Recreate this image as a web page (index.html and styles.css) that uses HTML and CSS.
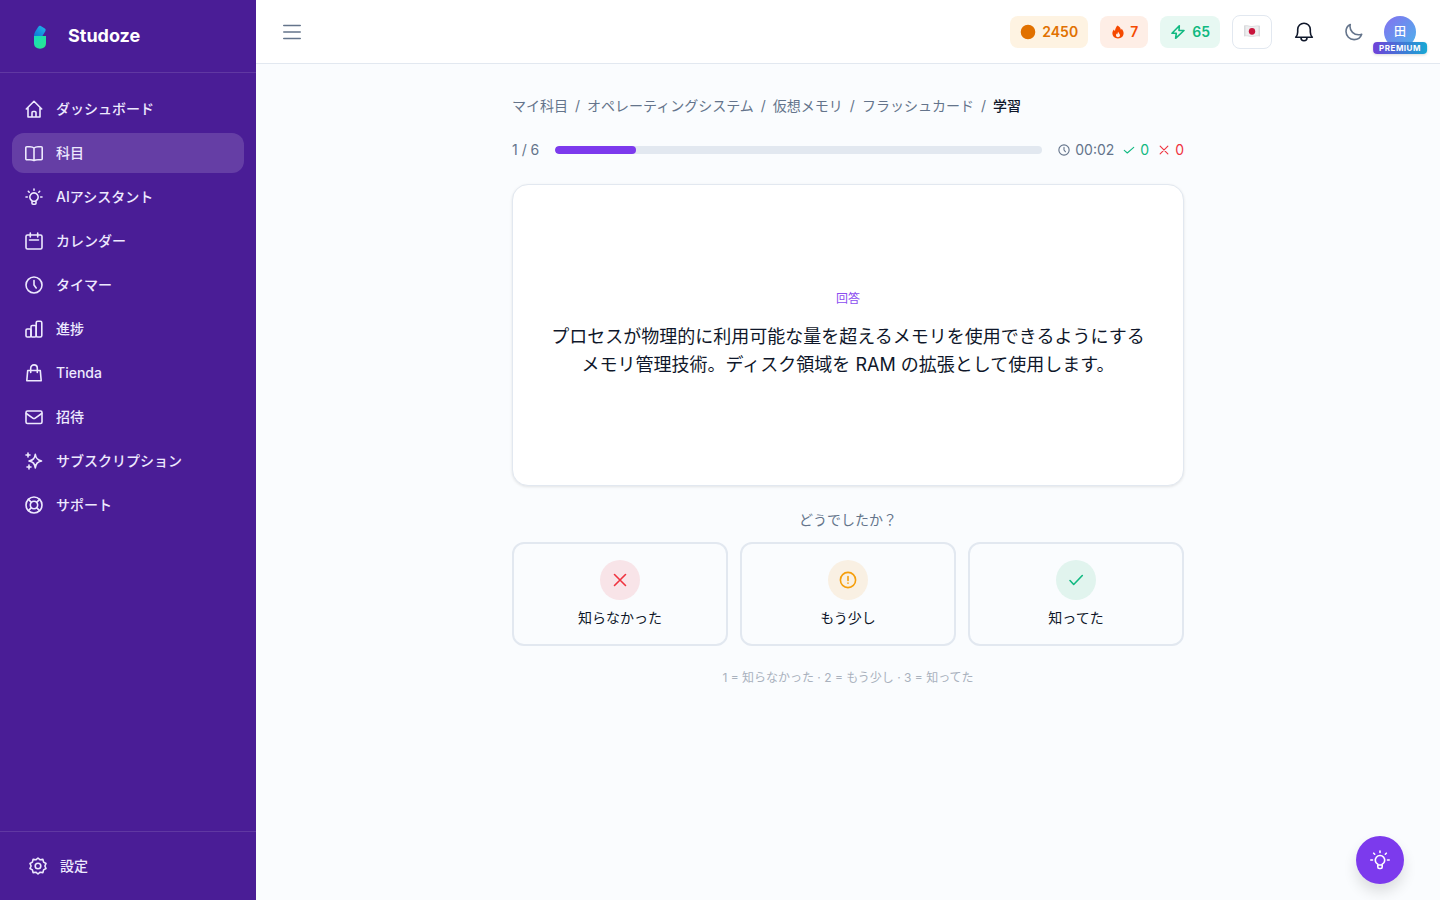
FILE: index.html
```html
<!DOCTYPE html>
<html lang="ja">
<head>
  <meta charset="UTF-8" />
  <meta name="viewport" content="width=device-width, initial-scale=1.0" />
  <title>学習 - Studoze</title>
  <link rel="stylesheet" href="styles.css">
</head>
<body>
  <aside class="sidebar">
    <a class="brand" href="#">
      <svg class="brand-logo" viewBox="0 0 32 32" aria-hidden="true">
        <defs>
          <linearGradient id="cap" x1="0" y1="1" x2="1" y2="0">
            <stop offset="0" stop-color="#0d74d8" />
            <stop offset="1" stop-color="#22b8e8" />
          </linearGradient>
          <linearGradient id="base" x1="0" y1="0" x2="1" y2="1">
            <stop offset="0" stop-color="#14dcc0" />
            <stop offset="1" stop-color="#2ee58a" />
          </linearGradient>
        </defs>
        <path d="M10 16c0-3 1.800-5.300 3.800-8.500.8-1.400 2-2 3-1.400l4 2.500c1 .7 1.100 1.600.4 2.800L18.400 16z" fill="url(#cap)" />
        <path d="M10 16h12v7c0 3.700-2.500 5.700-6 5.700s-6-2-6-5.700z" fill="url(#base)" />
      </svg>
      <span class="brand-name">Studoze</span>
    </a>

    <nav class="menu">
      <a href="#">
        <svg class="icon" viewBox="0 0 20 20"><path d="M2.300 10 10 2.300l7.700 7.700M4 8.500V18h12V8.500M8 18v-4.500a1 1 0 0 1 1-1h2a1 1 0 0 1 1 1V18" /></svg>
        ダッシュボード
      </a>
      <a class="active" href="#">
        <svg class="icon" viewBox="0 0 20 20"><path d="M10 5C8.800 3.900 7.500 3.700 6 3.700H2.800a1 1 0 0 0-1 1v11a1 1 0 0 0 1 1H6c1.500 0 2.800 0 4 .8 1.200-.8 2.500-.8 4-.8h3.200a1 1 0 0 0 1-1v-11a1 1 0 0 0-1-1H14c-1.500 0-2.800.2-4 1.300zM10 5v12.300" /></svg>
        科目
      </a>
      <a href="#">
        <svg class="icon" viewBox="0 0 20 20"><path d="M8 13.800a4.200 4.200 0 1 1 4 0v2.400a1 1 0 0 1-1 1H9a1 1 0 0 1-1-1zM8 14.300h4M10 2v1.300M4.300 4.300l.9.900M15.700 4.300l-.9.900M2 10h1.300M16.700 10H18" /></svg>
        AIアシスタント
      </a>
      <a href="#">
        <svg class="icon" viewBox="0 0 20 20"><rect x="2" y="4" width="16" height="14" rx="1.500" /><path d="M6.300 2v4M13.700 2v4M5.500 9h9" /></svg>
        カレンダー
      </a>
      <a href="#">
        <svg class="icon" viewBox="0 0 20 20"><circle cx="10" cy="10" r="8" /><path d="M10 5.500V10l2.200 3" /></svg>
        タイマー
      </a>
      <a href="#">
        <svg class="icon" viewBox="0 0 20 20"><rect x="2" y="10" width="5" height="8" rx="1.200" /><rect x="7" y="6.500" width="5.200" height="11.500" rx="1.200" /><rect x="12.200" y="2.300" width="5.600" height="15.700" rx="1.500" /></svg>
        進捗
      </a>
      <a href="#">
        <svg class="icon" viewBox="0 0 20 20"><path d="M3.700 7.500h12.600L17.200 17.700H2.800zM6.700 9.500V5.200a3.300 3.300 0 0 1 6.600 0v4.300" /></svg>
        Tienda
      </a>
      <a href="#">
        <svg class="icon" viewBox="0 0 20 20"><rect x="2" y="4" width="16" height="12.500" rx="1.500" /><path d="m2.300 6.500 6.500 4.600a2 2 0 0 0 2.400 0l6.500-4.600" /></svg>
        招待
      </a>
      <a href="#">
        <svg class="icon" viewBox="0 0 20 20"><path d="M11.300 3.300c.7 4.200 2 5.800 6.200 6.700-4.200.9-5.500 2.500-6.200 6.900-.7-4.400-2-6-6.300-6.900 4.300-.9 5.600-2.500 6.300-6.700zM4 2v4M2 4h4M5 14v4M3 16h4" /></svg>
        サブスクリプション
      </a>
      <a href="#">
        <svg class="icon" viewBox="0 0 20 20"><circle cx="10" cy="10" r="8" /><circle cx="10" cy="10" r="3.700" /><path d="m4.400 4.400 3 3M15.600 4.400l-3 3M4.400 15.600l3-3M15.600 15.600l-3-3" /></svg>
        サポート
      </a>
    </nav>

    <div class="sidebar-footer">
      <a href="#">
        <svg class="icon" viewBox="0 0 20 20"><path d="m10 2 2.100 1.800 2.800-.4.700 2.700 2.400 1.400-1.100 2.500 1.100 2.500-2.400 1.400-.7 2.700-2.800-.4L10 18l-2.100-1.800-2.800.4-.7-2.700L2 12.500 3.100 10 2 7.500l2.400-1.400.7-2.700 2.800.4z" /><circle cx="10" cy="10" r="2.800" /></svg>
        設定
      </a>
    </div>
  </aside>

  <div class="page">
    <header class="topbar">
      <button class="icon-btn menu-btn" type="button" aria-label="メニュー">
        <svg viewBox="0 0 20 20"><path d="M1.800 3.500h16.400M1.800 10h16.400M1.800 16.500h16.400" /></svg>
      </button>

      <div class="topbar-right">
        <span class="pill coins">
          <svg viewBox="0 0 16 16"><circle cx="8" cy="8" r="6.500" fill="currentColor" /></svg>
          2450
        </span>
        <span class="pill streak">
          <svg viewBox="0 0 16 16"><path fill="currentColor" d="M7.500 1.500c2.200 1.100 3.300 2.700 3.400 4.600.4-.3.600-.8.700-1.300 1.300 1.300 2 2.900 2 4.500 0 3-2.300 5.200-5.600 5.200S2.400 12.300 2.400 9.300c0-1.500.6-2.800 1.600-3.800.2.800.5 1.300 1 1.600.1-2.300 1.200-4.300 2.500-5.600z" /><path class="flame-inner" d="M8.200 7.800c.2 1.300 1.800 1.900 1.800 3.400 0 1.200-.8 2-2 2s-2-.8-2-2c0-.8.300-1.300.7-1.700.1.500.4.700.7.800 0-1 .3-1.800.8-2.500z" /></svg>
          7
        </span>
        <span class="pill energy">
          <svg viewBox="0 0 16 16"><path d="M9.300 1.700 2 9.300h4.300l-.7 5L14 6.500H9z" /></svg>
          65
        </span>
        <button class="lang-btn" type="button" aria-label="日本語">
          <svg viewBox="0 0 16 12"><path d="M0 .6c3-.8 5 .8 8 .4s5-.8 8-.2v10.600c-3-.6-5 .2-8 .4s-5-1-8-.3z" fill="#d9dadd" /><path d="M1.500 1.300c2.500-.3 4.500.8 6.500.5s4.500-.7 6.500-.4v9.200c-2.500-.3-4.500.2-6.500.4s-4-.8-6.500-.5z" fill="#eeeeef" /><ellipse cx="8" cy="6.300" rx="3.200" ry="3.400" fill="#c8143c" /></svg>
        </button>
        <button class="icon-btn bell-btn" type="button" aria-label="通知">
          <svg viewBox="0 0 20 20"><path d="M1.700 15.300c1.500-1.500 2-3 2-5.300V7.500a6.300 6.300 0 0 1 12.600 0V10c0 2.300.5 3.800 2 5.300zM7 15.700a3 3 0 0 0 6 0" /></svg>
        </button>
        <button class="icon-btn moon-btn" type="button" aria-label="ダークモード">
          <svg viewBox="0 0 20 20"><path d="M6.300 2.500C3.700 3.800 2 6.400 2 9.500 2 14 5.600 17.600 10.100 17.600c3.500 0 6.500-2.200 7.600-5.400-1 .4-2.100.6-3.200.6-4.700 0-8.500-3.700-8.500-8.300 0-.7.100-1.400.3-2z" /></svg>
        </button>
        <a class="avatar" href="#">
          <span class="avatar-img">田</span>
          <span class="badge">PREMIUM</span>
        </a>
      </div>
    </header>

    <main class="content">
      <nav class="breadcrumb">
        <a href="#">マイ科目</a>
        <span>/</span>
        <a href="#">オペレーティングシステム</a>
        <span>/</span>
        <a href="#">仮想メモリ</a>
        <span>/</span>
        <a href="#">フラッシュカード</a>
        <span>/</span>
        <span class="current">学習</span>
      </nav>

      <div class="progress-row">
        <span>1 / 6</span>
        <div class="progress" role="progressbar" aria-valuenow="1" aria-valuemin="0" aria-valuemax="6">
          <div class="progress-fill" style="width: 16.67%"></div>
        </div>
        <div class="stats">
          <span class="stat">
            <svg viewBox="0 0 14 14"><circle cx="7" cy="7" r="6" /><path d="M7 4v3l1.600 2" /></svg>
            00:02
          </span>
          <span class="stat good">
            <svg viewBox="0 0 14 14"><path d="m1.500 7.500 3.500 3L12.500 4" /></svg>
            0
          </span>
          <span class="stat bad">
            <svg viewBox="0 0 14 14"><path d="m2.500 2.500 9 9M11.500 2.500l-9 9" /></svg>
            0
          </span>
        </div>
      </div>

      <section class="flashcard">
        <span class="card-label">回答</span>
        <p class="card-text">プロセスが物理的に利用可能な量を超えるメモリを使用できるようにするメモリ管理技術。ディスク領域を RAM の拡張として使用します。</p>
      </section>

      <p class="question">どうでしたか？</p>

      <div class="answers">
        <button class="answer" type="button">
          <span class="answer-icon red"><svg viewBox="0 0 20 20"><path d="m4.500 4.500 11 11M15.500 4.500l-11 11" /></svg></span>
          知らなかった
        </button>
        <button class="answer" type="button">
          <span class="answer-icon amber"><svg viewBox="0 0 20 20"><circle cx="10" cy="10" r="7.600" /><path d="M10 6.500v4M10 13v.3" /></svg></span>
          もう少し
        </button>
        <button class="answer" type="button">
          <span class="answer-icon green"><svg viewBox="0 0 20 20"><path d="m4 10.500 3.700 4L16.300 5.500" /></svg></span>
          知ってた
        </button>
      </div>

      <p class="hint">1 = 知らなかった · 2 = もう少し · 3 = 知ってた</p>
    </main>
  </div>

  <button class="assistant-btn" type="button" aria-label="AIアシスタント">
    <svg class="icon" viewBox="0 0 20 20"><path d="M7.800 14.300a4.700 4.700 0 1 1 4.400 0V17a1.500 1.500 0 0 1-1.500 1.500H9.300A1.500 1.500 0 0 1 7.800 17zM7.800 15h4.400M10 1v1.500M3.700 3.200l1 1M16.300 3.200l-1 1M.8 10h1.700M17.500 10h1.700" /></svg>
  </button>
</body>
</html>
```
FILE: styles.css
```css
* {
  box-sizing: border-box;
}

body {
  display: flex;
  min-height: 100vh;
  margin: 0;
  font-family: Inter, "Noto Sans CJK JP", sans-serif;
  font-size: 14px;
  line-height: 20px;
  color: #0f172a;
  background-color: #fafcfe;
}

a {
  color: inherit;
  text-decoration: none;
}

button {
  font: inherit;
  color: inherit;
  cursor: pointer;
}

p {
  margin: 0;
}

svg {
  flex-shrink: 0;
  fill: none;
  stroke: currentColor;
  stroke-width: 1.6;
  stroke-linecap: round;
  stroke-linejoin: round;
}

.icon {
  width: 20px;
  height: 20px;
}

/* Sidebar */
.sidebar {
  display: flex;
  flex-direction: column;
  flex-shrink: 0;
  width: 256px;
  background-color: #4a1d96;
  color: #ede9fe;
  font-weight: 500;
}

.brand {
  display: flex;
  align-items: center;
  gap: 12px;
  padding: 20px 24px;
  border-bottom: 1px solid rgba(255, 255, 255, 0.12);
}

.brand-logo {
  width: 32px;
  height: 32px;
  stroke: none;
}

.brand-name {
  font-size: 18px;
  font-weight: 700;
  color: #ffffff;
}

.menu {
  display: flex;
  flex-direction: column;
  flex: 1;
  gap: 4px;
  padding: 16px 12px;
}

.menu a,
.sidebar-footer a {
  display: flex;
  align-items: center;
  gap: 12px;
  padding: 10px 12px;
  border-radius: 12px;
}

.menu a.active {
  background-color: rgba(255, 255, 255, 0.15);
}

.sidebar-footer {
  padding: 16px;
  border-top: 1px solid rgba(255, 255, 255, 0.12);
}

.sidebar-footer a {
  padding: 8px 12px;
}

/* Top bar */
.page {
  flex: 1;
  min-width: 0;
}

.topbar {
  display: flex;
  align-items: center;
  justify-content: space-between;
  height: 64px;
  padding: 0 24px 0 16px;
  background-color: #ffffff;
  border-bottom: 1px solid #e2e8f0;
}

.topbar-right {
  display: flex;
  align-items: center;
  gap: 12px;
}

.icon-btn {
  display: flex;
  align-items: center;
  justify-content: center;
  width: 40px;
  height: 40px;
  padding: 0;
  border: none;
  background: none;
}

.icon-btn svg {
  width: 20px;
  height: 20px;
}

.menu-btn,
.moon-btn {
  color: #64748b;
}

.moon-btn {
  width: 36px;
}

.pill {
  display: flex;
  align-items: center;
  gap: 6px;
  height: 32px;
  padding: 0 10px;
  border-radius: 8px;
  font-weight: 600;
}

.pill svg {
  width: 16px;
  height: 16px;
}

.coins {
  color: #e17100;
  background-color: #fef3e2;
}

.streak {
  gap: 4px;
  color: #f54900;
  background-color: #feeee6;
}

.streak svg {
  stroke: none;
}

.flame-inner {
  fill: #feeee6;
}

.energy {
  color: #10b981;
  background-color: #e7f8f2;
}

.lang-btn {
  display: flex;
  align-items: center;
  justify-content: center;
  width: 40px;
  height: 34px;
  padding: 0 0 2px;
  border: 1px solid #e2e8f0;
  border-radius: 8px;
  background-color: #ffffff;
}

.lang-btn svg {
  width: 16px;
  height: 12px;
  stroke: none;
}

.avatar {
  position: relative;
}

.avatar-img {
  display: flex;
  align-items: center;
  justify-content: center;
  width: 32px;
  height: 32px;
  border-radius: 50%;
  background: linear-gradient(135deg, #8470f0, #4db4ec);
  color: #ffffff;
  font-size: 12px;
  font-weight: 500;
}

.badge {
  position: absolute;
  left: 50%;
  bottom: -6px;
  transform: translateX(-50%);
  padding: 0 6px;
  border-radius: 4px;
  background: linear-gradient(90deg, #7040d8, #18a8d4);
  box-shadow: 0 1px 3px rgba(0, 0, 0, 0.15);
  color: #ffffff;
  font-size: 8px;
  font-weight: 700;
  line-height: 12px;
  letter-spacing: 0.5px;
}

/* Study session */
.content {
  max-width: 720px;
  margin: 0 auto;
  padding: 32px 24px;
}

.breadcrumb {
  display: flex;
  gap: 7px;
  margin-bottom: 24px;
  color: #64748b;
}

.breadcrumb .current {
  color: #0f172a;
  font-weight: 500;
}

.progress-row {
  display: flex;
  align-items: center;
  gap: 16px;
  margin-bottom: 24px;
  color: #64748b;
}

.progress {
  flex: 1;
  height: 8px;
  border-radius: 4px;
  background-color: #e2e8f0;
  overflow: hidden;
}

.progress-fill {
  height: 100%;
  border-radius: 4px;
  background-color: #7c3aed;
}

.stats {
  display: flex;
  gap: 9px;
}

.stat {
  display: flex;
  align-items: center;
  gap: 5px;
}

.stat svg {
  width: 12px;
  height: 12px;
  stroke-width: 1.3;
}

.good {
  color: #10b981;
}

.bad {
  color: #ef333f;
}

.flashcard {
  display: flex;
  flex-direction: column;
  align-items: center;
  justify-content: center;
  gap: 16px;
  min-height: 302px;
  padding: 32px;
  margin-bottom: 24px;
  border: 1px solid #e2e8f0;
  border-radius: 16px;
  background-color: #ffffff;
  box-shadow: 0 1px 3px rgba(0, 0, 0, 0.1);
}

.card-label {
  color: #8b4df0;
  font-size: 12px;
  line-height: 16px;
}

.card-text {
  font-size: 18px;
  line-height: 28px;
  text-align: center;
}

.question {
  margin-bottom: 12px;
  color: #64748b;
  text-align: center;
}

.answers {
  display: grid;
  grid-template-columns: repeat(3, 1fr);
  gap: 12px;
  margin-bottom: 24px;
}

.answer {
  display: flex;
  flex-direction: column;
  align-items: center;
  gap: 8px;
  padding: 16px;
  border: 2px solid #e2e8f0;
  border-radius: 12px;
  background: none;
}

.answer-icon {
  display: flex;
  align-items: center;
  justify-content: center;
  width: 40px;
  height: 40px;
  border-radius: 50%;
}

.answer-icon svg {
  width: 20px;
  height: 20px;
}

.red {
  color: #ef333f;
  background-color: #f8e4e8;
}

.amber {
  color: #f59e0b;
  background-color: #f9f0e3;
}

.green {
  color: #10b981;
  background-color: #e1f4ee;
}

.hint {
  color: #a9b1bd;
  font-size: 12px;
  line-height: 16px;
  text-align: center;
}

.assistant-btn {
  position: fixed;
  right: 36px;
  bottom: 16px;
  display: flex;
  align-items: center;
  justify-content: center;
  width: 48px;
  height: 48px;
  padding: 0;
  border: none;
  border-radius: 50%;
  background-color: #7c3aed;
  box-shadow: 0 8px 14px rgba(0, 0, 0, 0.12);
  color: #ffffff;
}
```
